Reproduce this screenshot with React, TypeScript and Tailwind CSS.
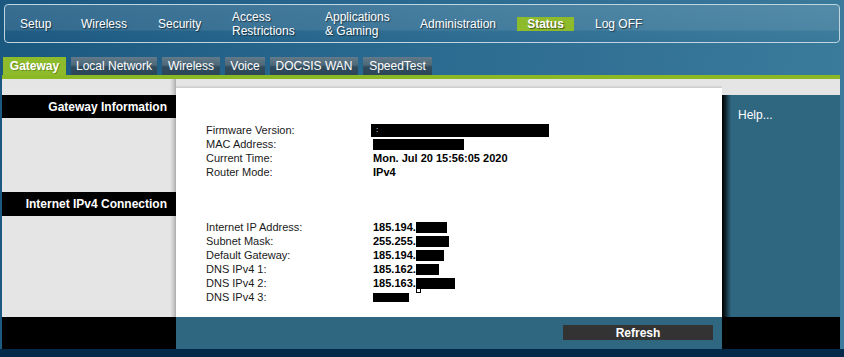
import React from "react";

const navItems = [
  { label: ["Setup"], w: "w-[61px]" },
  { label: ["Wireless"], w: "w-[77px]" },
  { label: ["Security"], w: "w-[74px]" },
  { label: ["Access", "Restrictions"], w: "w-[93px]" },
  { label: ["Applications", "& Gaming"], w: "w-[95px]" },
  { label: ["Administration"], w: "w-[97px]" },
];

const tabs = [
  { label: "Gateway", w: "w-[63px]", active: true },
  { label: "Local Network", w: "w-[86px]" },
  { label: "Wireless", w: "w-[58px]" },
  { label: "Voice", w: "w-[40px]" },
  { label: "DOCSIS WAN", w: "w-[88px]" },
  { label: "SpeedTest", w: "w-[69px]" },
];

function Blob({ w, extra }: { w: string; extra?: React.ReactNode }) {
  return (
    <span className={`relative inline-block h-[11px] ${w} bg-black align-[-1px]`}>{extra}</span>
  );
}

function Row({ label, children }: { label: string; children?: React.ReactNode }) {
  return (
    <div className="flex h-[14px] items-center">
      <div className="w-[167px] text-[11px] text-[#1a1a1a]">{label}</div>
      <div className="flex items-center text-[11px] font-bold text-black">{children}</div>
    </div>
  );
}

function SectionHeader({ title }: { title: string }) {
  return (
    <div className="flex h-[23px] items-center justify-end bg-black pr-[9px] text-[12px] font-bold text-white">
      {title}
    </div>
  );
}

export default function App() {
  return (
    <div className="flex h-[357px] w-[844px] flex-col overflow-hidden bg-[linear-gradient(100deg,#1b5880_0%,#2b6a90_45%,#3c7c9c_100%)] font-['Liberation_Sans',Arial,sans-serif]">
      {/* Top navigation */}
      <div className="px-[4px] pt-[4px]">
        <div className="relative h-[39px] w-[836px] rounded-[4px] border border-[#bfd5e0] bg-[linear-gradient(to_bottom,rgba(255,255,255,0.13)_0%,rgba(255,255,255,0.1)_68%,rgba(255,255,255,0.02)_70%,rgba(255,255,255,0)_100%)]">
          <div className="flex h-full items-center pl-[15px] text-[12px] leading-[14px] text-white [text-shadow:1px_1px_1px_rgba(0,0,0,0.55)]">
            {navItems.map((n) => (
              <div key={n.label.join()} className={`${n.w} flex flex-col ${n.label.length === 1 ? "pb-[0px]" : ""}`}>
                {n.label.map((l) => (
                  <span key={l}>{l}</span>
                ))}
              </div>
            ))}
            <div className="mb-[0px] flex h-[14px] w-[57px] items-center justify-center bg-[#8dbb2c] font-bold">
              Status
            </div>
            <div className="ml-[21px]">Log OFF</div>
          </div>
        </div>
      </div>

      {/* Sub tabs */}
      <div className="mt-[14px] flex gap-[5px] pl-[3px]">
        {tabs.map((t) => (
          <div
            key={t.label}
            className={`${t.w} flex h-[18px] items-center justify-center text-[12px] text-white ${
              t.active
                ? "bg-[#8dbb2c] font-bold [text-shadow:1px_1px_0_rgba(0,0,0,0.25)]"
                : "bg-[linear-gradient(to_bottom,#627a8a_0%,#4e6878_45%,#2f4b5d_55%,#2c4757_100%)]"
            }`}
          >
            {t.label}
          </div>
        ))}
      </div>

      <div className="mx-[2px] h-[4px] w-[838px] bg-[#8ab925]" />

      {/* Main area */}
      <div className="mx-[2px] flex h-[238px] w-[838px]">
        <div className="w-[174px] bg-[linear-gradient(to_right,#e5e5e5_0px,#e5e5e5_168px,#c6c6c6_172px,#a9a9a9_174px)] pt-[16px]">
          <SectionHeader title="Gateway Information" />
          <div className="h-[74px]" />
          <div className="flex h-[24px] items-center justify-end bg-black pr-[9px] text-[12px] font-bold text-white">
            Internet IPv4 Connection
          </div>
        </div>

        <div className="flex w-[546px] flex-col">
          <div className="h-[9px] bg-[linear-gradient(to_bottom,#e5e5e5_0%,#e5e5e5_70%,#c9c9c9_100%)]" />
          <div className="flex-1 bg-white pl-[30px] pt-[35px]">
            <Row label="Firmware Version:">
              <span className="relative ml-[-2px] inline-block h-[13px] w-[178px] bg-black">
                <span className="absolute left-[5px] top-[2px] text-[8px] font-normal leading-[8px] text-white">:</span>
              </span>
            </Row>
            <Row label="MAC Address:">
              <span className="inline-block h-[11px] w-[91px] bg-black" />
            </Row>
            <Row label="Current Time:">Mon. Jul 20 15:56:05 2020</Row>
            <Row label="Router Mode:">IPv4</Row>

            <div className="h-[41px]" />
            <Row label="Internet IP Address:">
              185.194.<Blob w="w-[31px]" />
            </Row>
            <Row label="Subnet Mask:">
              255.255.<Blob w="w-[33px]" />
            </Row>
            <Row label="Default Gateway:">
              185.194.<Blob w="w-[28px]" />
            </Row>
            <Row label="DNS IPv4 1:">
              185.162.<Blob w="w-[23px]" />
            </Row>
            <Row label="DNS IPv4 2:">
              185.163.
              <Blob
                w="w-[39px]"
                extra={<span className="absolute left-[0px] top-[10px] h-[5px] w-[5px] border border-black bg-white" />}
              />
            </Row>
            <Row label="DNS IPv4 3:">
              <span className="inline-block h-[9px] w-[36px] bg-black" />
            </Row>
          </div>
        </div>

        <div className="flex w-[118px] flex-col">
          <div className="h-[16px] bg-[#e5e5e5]" />
          <div className="flex-1 bg-[linear-gradient(to_right,#000_0px,#0c1d26_3px,#2f6680_9px,#2f6680_100%)] pl-[16px] pt-[13px] text-[12px] leading-[14px] text-white">
            Help...
          </div>
        </div>
      </div>

      {/* Bottom bar */}
      <div className="mx-[2px] flex h-[32px] w-[838px]">
        <div className="w-[174px] bg-black" />
        <div className="flex w-[546px] items-start justify-end bg-[#2f6680] pr-[9px] pt-[8px]">
          <div className="flex h-[15px] w-[150px] items-center justify-center bg-[#333333] text-[12px] font-bold text-white">
            Refresh
          </div>
        </div>
        <div className="w-[118px] bg-black" />
      </div>

      <div className="h-[8px] w-full bg-[#03294a]" />
    </div>
  );
}
